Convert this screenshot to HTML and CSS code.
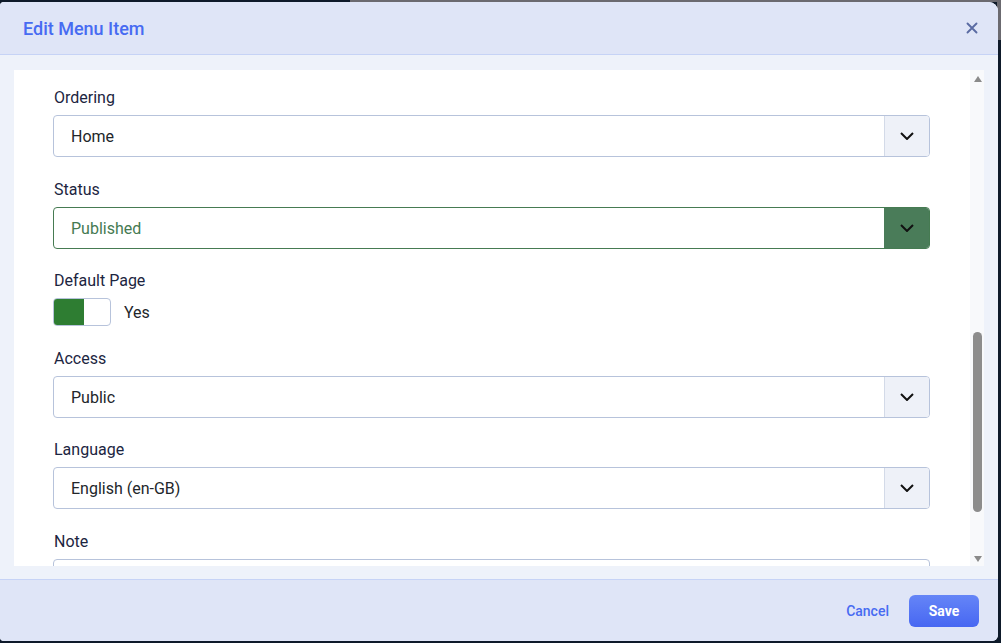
FILE: index.html
```html
<!DOCTYPE html>
<html lang="en">
<head>
<meta charset="utf-8">
<title>Edit Menu Item</title>
<link rel="stylesheet" href="styles.css">
</head>
<body>
<div class="modal">
  <header class="modal-header">
    <h1 class="modal-title">Edit Menu Item</h1>
    <button class="close" aria-label="Close">
      <svg width="12" height="12" viewBox="0 0 12 12"><path d="M1.5 1.5L10.5 10.5M10.5 1.5L1.5 10.5" stroke="#5a6ba3" stroke-width="1.9" stroke-linecap="round"/></svg>
    </button>
  </header>
  <div class="modal-body">
    <div class="scroller">
      <div class="content">
        <div class="group">
          <label class="label">Ordering</label>
          <div class="select">
            <span class="value">Home</span>
            <span class="arrow"><svg width="14" height="8" viewBox="0 0 14 8"><path d="M1 1l6 6 6-6" fill="none" stroke="#111" stroke-width="2"/></svg></span>
          </div>
        </div>
        <div class="group">
          <label class="label">Status</label>
          <div class="select select-success">
            <span class="value">Published</span>
            <span class="arrow"><svg width="14" height="8" viewBox="0 0 14 8"><path d="M1 1l6 6 6-6" fill="none" stroke="#111" stroke-width="2"/></svg></span>
          </div>
        </div>
        <div class="group">
          <label class="label">Default Page</label>
          <div class="switch-row">
            <span class="switch"><span class="switch-on"></span></span>
            <span class="switch-text">Yes</span>
          </div>
        </div>
        <div class="group">
          <label class="label">Access</label>
          <div class="select">
            <span class="value">Public</span>
            <span class="arrow"><svg width="14" height="8" viewBox="0 0 14 8"><path d="M1 1l6 6 6-6" fill="none" stroke="#111" stroke-width="2"/></svg></span>
          </div>
        </div>
        <div class="group">
          <label class="label">Language</label>
          <div class="select">
            <span class="value">English (en-GB)</span>
            <span class="arrow"><svg width="14" height="8" viewBox="0 0 14 8"><path d="M1 1l6 6 6-6" fill="none" stroke="#111" stroke-width="2"/></svg></span>
          </div>
        </div>
        <div class="group">
          <label class="label">Note</label>
          <div class="input"></div>
        </div>
      </div>
      <div class="scrollbar">
        <span class="sb-up"></span>
        <div class="sb-track"><span class="sb-thumb"></span></div>
        <span class="sb-down"></span>
      </div>
    </div>
  </div>
  <footer class="modal-footer">
    <button class="btn-link">Cancel</button>
    <button class="btn-primary">Save</button>
  </footer>
</div>
</body>
</html>
```
FILE: styles.css
```css
* { box-sizing: border-box; }
html, body { height: 100%; }
body {
  margin: 0;
  font-family: Roboto, "Liberation Sans", Arial, sans-serif;
  background:
    linear-gradient(#6b6a70, #6b6a70) no-repeat 350px 0 / 100% 2px,
    linear-gradient(#6b6a70, #6b6a70) no-repeat 997px 0 / 10px 40px,
    #0e1a2a;
  overflow: hidden;
}
.modal {
  margin-top: 2px;
  width: 998px;
  height: 639px;
  display: flex;
  flex-direction: column;
  border-radius: 4px 9px 6px 4px;
  overflow: hidden;
  background: #eef2fa;
}
.modal-header {
  height: 53px;
  flex: none;
  background: #dfe5f7;
  border-bottom: 1px solid #c6d3f6;
  display: flex;
  align-items: center;
  justify-content: space-between;
  padding: 0 19px 0 23px;
}
.modal-title {
  margin: 0;
  font-size: 18px;
  font-weight: 500;
  color: #476bf2;
  letter-spacing: 0;
}
.close {
  border: 0;
  background: none;
  padding: 0;
  width: 14px;
  height: 14px;
  display: flex;
  align-items: center;
  justify-content: center;
}
.modal-body {
  flex: 1;
  padding: 15px 14px 13px 14px;
  min-height: 0;
}
.scroller {
  height: 496px;
  background: #fff;
  display: flex;
}
.content {
  flex: 1;
  overflow: hidden;
  padding: 16px 40px 0 39px;
}
.group { margin-bottom: 20px; }
.group:nth-child(1),
.group:nth-child(3),
.group:nth-child(5) { margin-bottom: 21px; }
.label {
  display: block;
  font-size: 16px;
  line-height: 23px;
  color: #1c2541;
  margin-bottom: 6px;
  padding-left: 1px;
}
.select {
  height: 42px;
  border: 1px solid #b7c3db;
  border-radius: 4px;
  display: flex;
  align-items: center;
  overflow: hidden;
}
.value {
  flex: 1;
  padding-left: 17px;
  font-size: 16px;
  color: #22262a;
}
.arrow {
  width: 45px;
  height: 100%;
  background: #eef1f8;
  border-left: 1px solid #d3dae8;
  display: flex;
  align-items: center;
  justify-content: center;
}
.select-success { border-color: #467b52; }
.select-success .value { color: #457a52; }
.select-success .arrow { background: #4a7c59; border-left-color: #4a7c59; }
.switch-row {
  display: flex;
  align-items: center;
  gap: 13px;
}
.switch {
  width: 58px;
  height: 28px;
  border: 1px solid #b7c3db;
  border-radius: 4px;
  display: flex;
  overflow: hidden;
  background: #fff;
}
.switch-on {
  width: 30px;
  background: #2e7d32;
}
.switch-text {
  font-size: 16px;
  color: #22262a;
}
.input {
  height: 42px;
  border: 1px solid #b7c3db;
  border-radius: 4px;
}
.scrollbar {
  width: 14px;
  flex: none;
  background: #f8f9fb;
  display: flex;
  flex-direction: column;
  align-items: center;
  padding: 6px 0 4px 1px;
}
.sb-up, .sb-down {
  width: 0;
  height: 0;
  border-left: 4.5px solid transparent;
  border-right: 4.5px solid transparent;
  flex: none;
}
.sb-up { border-bottom: 6px solid #8a8a8a; }
.sb-down { border-top: 6px solid #8a8a8a; }
.sb-track {
  flex: 1;
  width: 9px;
  padding: 250px 0 44px;
  display: flex;
}
.sb-thumb {
  flex: 1;
  background: #8c8c8c;
  border-radius: 5px;
}
.modal-footer {
  height: 62px;
  flex: none;
  background: #dfe5f7;
  border-top: 1px solid #c6d3f6;
  display: flex;
  align-items: center;
  justify-content: flex-end;
  padding: 0 19px 0 0;
  gap: 20px;
}
.btn-link {
  border: 0;
  background: none;
  padding: 0;
  font-family: inherit;
  font-size: 14px;
  font-weight: 500;
  color: #476bf2;
}
.btn-primary {
  width: 70px;
  height: 32px;
  border: 0;
  border-radius: 6px;
  background: linear-gradient(#6585f7, #4767f2);
  color: #fff;
  font-family: inherit;
  font-size: 14px;
  font-weight: 700;
}
```
